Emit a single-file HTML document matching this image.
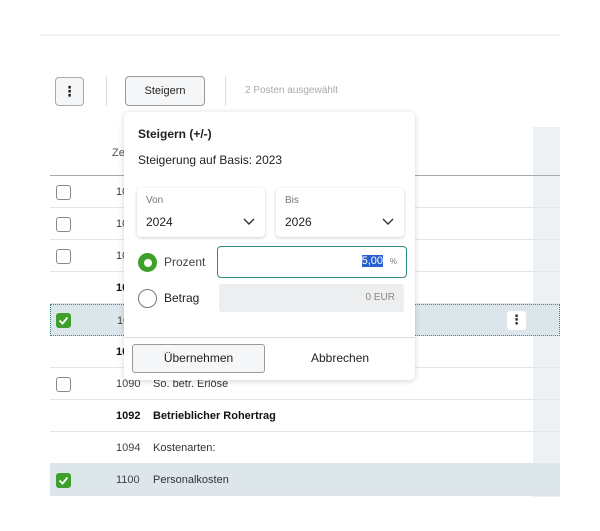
<!DOCTYPE html>
<html><head><meta charset="utf-8"><style>
*{box-sizing:border-box;margin:0;padding:0}
body{width:600px;height:531px;background:#fff;font-family:"Liberation Sans","DejaVu Sans",sans-serif;color:#222;position:relative;overflow:hidden}
.a{position:absolute}
.row{position:absolute;left:50px;width:510px;height:32px;border-bottom:1px solid #e3e6e8;font-size:11px}
.cb{position:absolute;left:6px;top:9px;width:15px;height:15px;border:1.5px solid #8a8a8a;border-radius:3px;background:#fff}
.cbk{position:absolute;left:6px;top:9px;width:15px;height:15px;border-radius:3px;background:#3ea02a}
.num{position:absolute;left:66px;top:10px;color:#444}
.txt{position:absolute;left:103px;top:10px;color:#333}
.b{font-weight:bold;color:#111}
.sel{background:#dde6eb}
</style></head><body>
<div class="a" style="left:40px;top:34px;width:520px;height:2px;background:#f1f2f3"></div>
<!-- toolbar -->
<div class="a" style="left:55px;top:77px;width:29px;height:29px;border:1px solid #aaa;border-radius:4px;background:#f5f6f7;font-weight:bold;text-align:center;line-height:26px;font-size:14px">⋮</div>
<div class="a" style="left:106px;top:76px;width:1px;height:30px;background:#ddd"></div>
<div class="a" style="left:125px;top:76px;width:80px;height:30px;border:1px solid #999;border-radius:4px;background:#f5f6f7;font-size:11px;text-align:center;line-height:28px">Steigern</div>
<div class="a" style="left:225px;top:76px;width:1px;height:30px;background:#ddd"></div>
<div class="a" style="left:245px;top:85px;font-size:10px;color:#aaa">2 Posten ausgewählt</div>
<!-- gray col -->
<div class="a" style="left:533px;top:127px;width:27px;height:370px;background:#eef1f3"></div>
<div class="a" style="left:112px;top:147px;font-size:11px;color:#555">Zei</div>
<div class="a" style="left:50px;top:175px;width:510px;height:1px;background:#aaa"></div>
<div class="row" style="top:176px"><div class="cb"></div><div class="num">10</div></div>
<div class="row" style="top:208px"><div class="cb"></div><div class="num">10</div></div>
<div class="row" style="top:240px"><div class="cb"></div><div class="num">10</div></div>
<div class="row" style="top:272px"><div class="num b">10</div></div>
<div class="row sel" style="top:304px;border:1px dotted #3a8a7a"><div class="cbk" style="top:8px;left:5px"><svg width="15" height="15"><path d="M3.5 7.5l3 3 5-6" stroke="#fff" stroke-width="1.8" fill="none"/></svg></div><div class="num">10</div>
<div class="a" style="left:456px;top:6px;width:19px;height:19px;background:#fff;border-radius:3px;text-align:center;font-weight:bold;font-size:13px;line-height:18px">⋮</div></div>
<div class="row" style="top:336px"><div class="num b">10</div></div>
<div class="row" style="top:368px"><div class="cb"></div><div class="num">1090</div><div class="txt">So. betr. Erlöse</div></div>
<div class="row" style="top:400px"><div class="num b">1092</div><div class="txt b">Betrieblicher Rohertrag</div></div>
<div class="row" style="top:432px"><div class="num">1094</div><div class="txt">Kostenarten:</div></div>
<div class="row sel" style="top:464px"><div class="cbk"><svg width="15" height="15"><path d="M3.5 7.5l3 3 5-6" stroke="#fff" stroke-width="1.8" fill="none"/></svg></div><div class="num">1100</div><div class="txt">Personalkosten</div></div>
<!-- popup -->
<div class="a" style="left:124px;top:112px;width:291px;height:268px;background:#fff;border-radius:5px;box-shadow:0 1px 6px rgba(0,0,0,.18)">
<div class="a" style="left:14px;top:15px;font-size:12px;font-weight:bold">Steigern (+/-)</div>
<div class="a" style="left:14px;top:41px;font-size:12px">Steigerung auf Basis: 2023</div>
<div class="a" style="left:13px;top:76px;width:128px;height:49px;border-radius:4px;box-shadow:0 1px 3px rgba(0,0,0,.2)">
<div class="a" style="left:9px;top:7px;font-size:10px;color:#777">Von</div>
<div class="a" style="left:9px;top:27px;font-size:12px">2024</div>
<svg class="a" style="left:106px;top:30px" width="12" height="8"><path d="M1 1l5 5 5-5" stroke="#333" stroke-width="1.4" fill="none"/></svg></div>
<div class="a" style="left:152px;top:76px;width:128px;height:49px;border-radius:4px;box-shadow:0 1px 3px rgba(0,0,0,.2)">
<div class="a" style="left:9px;top:7px;font-size:10px;color:#777">Bis</div>
<div class="a" style="left:9px;top:27px;font-size:12px">2026</div>
<svg class="a" style="left:106px;top:30px" width="12" height="8"><path d="M1 1l5 5 5-5" stroke="#333" stroke-width="1.4" fill="none"/></svg></div>
<div class="a" style="left:14px;top:141px;width:19px;height:19px;border-radius:50%;background:#3ea02a"><div class="a" style="left:5.5px;top:5.5px;width:8px;height:8px;border-radius:50%;background:#fff"></div></div>
<div class="a" style="left:40px;top:143px;font-size:12px;color:#444">Prozent</div>
<div class="a" style="left:93px;top:134px;width:190px;height:32px;border:1.5px solid #2f8a80;border-radius:4px;background:#fff">
<span class="a" style="right:23px;top:8px;font-size:11px;background:#2a5fd0;color:#fff">5,00</span><span class="a" style="right:9px;top:10px;font-size:8px;color:#777">%</span></div>
<div class="a" style="left:14px;top:177px;width:19px;height:19px;border-radius:50%;border:1.5px solid #777"></div>
<div class="a" style="left:40px;top:179px;font-size:12px">Betrag</div>
<div class="a" style="left:95px;top:172px;width:185px;height:28px;background:#eceeef;border-radius:3px;font-size:10px;color:#888;text-align:right;padding-right:9px;line-height:28px">0 EUR</div>
<div class="a" style="left:0;top:225px;width:291px;height:1px;background:#ddd"></div>
<div class="a" style="left:8px;top:232px;width:133px;height:29px;border:1px solid #999;border-radius:3px;background:#f5f6f7;font-size:12px;text-align:center;line-height:27px">Übernehmen</div>
<div class="a" style="left:187px;top:239px;font-size:12px">Abbrechen</div>
</div>
</body></html>
